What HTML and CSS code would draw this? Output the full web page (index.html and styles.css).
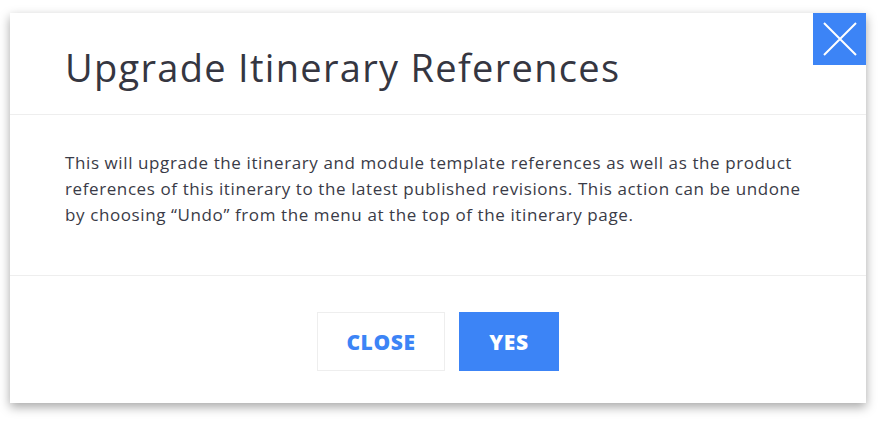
FILE: index.html
```html
<!DOCTYPE html>
<html>
<head>
<meta charset="utf-8">
<link rel="stylesheet" href="styles.css">
</head>
<body>
<div class="modal">
  <div class="modal-header">
    <h1 class="title">Upgrade Itinerary References</h1>
    <button class="dismiss" aria-label="Close">
      <svg width="34" height="34" viewBox="0 0 34 34"><path d="M1 1L33 33M33 1L1 33" stroke="#fff" stroke-width="2" fill="none"/></svg>
    </button>
  </div>
  <div class="modal-body">
    <p class="text">This will upgrade the itinerary and module template references as well as the product references of this itinerary to the latest published revisions. This action can be undone by choosing “Undo” from the menu at the top of the itinerary page.</p>
  </div>
  <div class="modal-footer">
    <button class="btn btn-outline">CLOSE</button>
    <button class="btn btn-primary">YES</button>
  </div>
</div>
</body>
</html>
```
FILE: styles.css
```css
* { box-sizing: border-box; }
html, body { margin: 0; background: #fff; }
body { padding: 13px 12px 19px 10px; font-family: "Open Sans", "Noto Sans", sans-serif; color: #3a3b47; }
.modal {
  width: 856px;
  height: 390px;
  background: #fff;
  box-shadow: 0 4px 10px rgba(0,0,0,0.35);
  display: flex;
  flex-direction: column;
}
.modal-header {
  position: relative;
  height: 102px;
  border-bottom: 1px solid #eeeeee;
  display: flex;
  align-items: center;
  padding: 0 55px;
}
.title {
  margin: 0;
  font-weight: 400;
  font-size: 38px;
  letter-spacing: 1.3px;
  color: #353641;
  padding-top: 7px;
}
.dismiss {
  position: absolute;
  top: 0;
  right: 0;
  width: 53px;
  height: 52px;
  border: 0;
  padding: 0;
  background: #3c84f6;
  display: flex;
  align-items: center;
  justify-content: center;
}
.modal-body {
  height: 161px;
  border-bottom: 1px solid #eeeeee;
  padding: 35px 50px 0 55px;
}
.text {
  margin: 0;
  font-size: 17px;
  letter-spacing: 0.6px;
  line-height: 26px;
  color: #3a3b47;
}
.modal-footer {
  flex: 1;
  display: flex;
  justify-content: center;
  gap: 14px;
  padding-top: 36px;
}
.btn {
  height: 59px;
  font-family: "Open Sans", sans-serif;
  font-weight: 800;
  font-size: 21px;
  letter-spacing: 0.6px;
  border: 0;
  padding: 0;
}
.btn-outline {
  width: 128px;
  background: #fff;
  border: 1px solid #eeeeee;
  color: #3c84f6;
}
.btn-primary {
  width: 100px;
  background: #3c84f6;
  color: #fff;
}
```
